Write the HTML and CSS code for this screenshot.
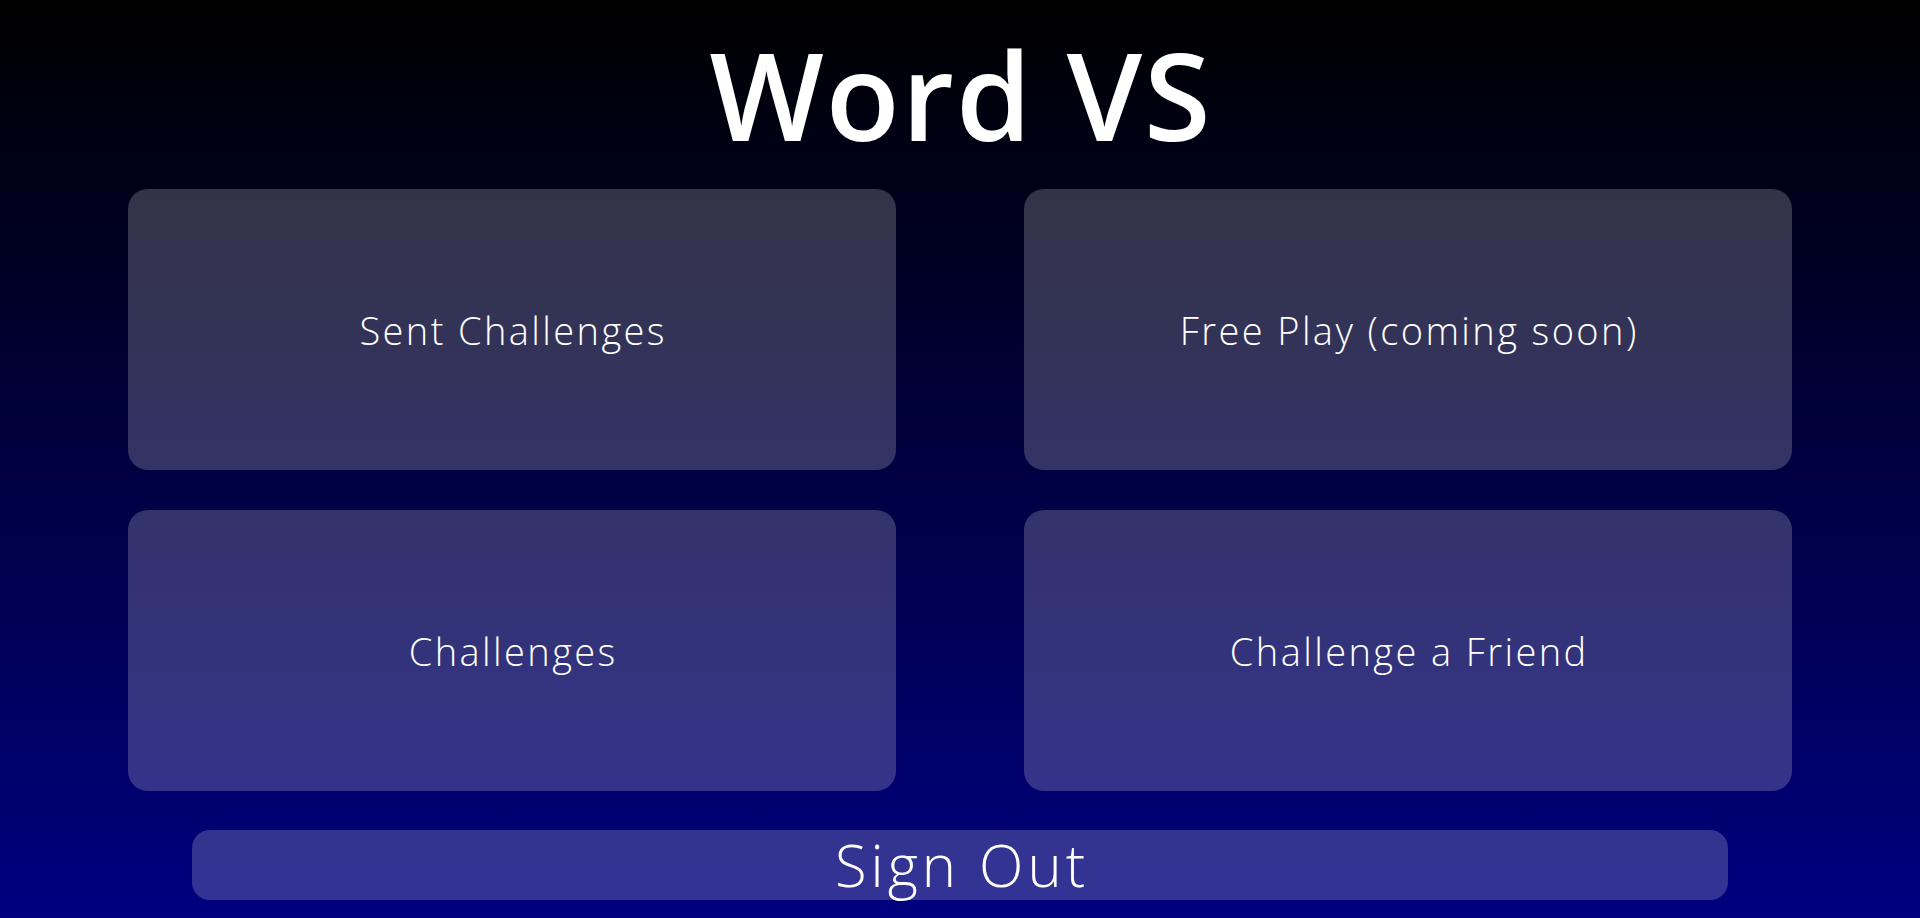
FILE: index.html
```html
<!DOCTYPE html>
<html lang="en">
<head>
<meta charset="utf-8">
<title>Word VS</title>
<link rel="stylesheet" href="styles.css">
</head>
<body>
<main class="page">
  <h1 class="title">Word VS</h1>
  <div class="menu">
    <button class="card">Sent Challenges</button>
    <button class="card">Free Play (coming soon)</button>
    <button class="card">Challenges</button>
    <button class="card">Challenge a Friend</button>
  </div>
  <button class="signout">Sign Out</button>
</main>
</body>
</html>
```

FILE: styles.css
```css
html, body {
  margin: 0;
  padding: 0;
}
body {
  height: 918px;
  overflow: hidden;
  background: linear-gradient(to bottom, #000000 0%, #000080 100%);
  font-family: "Open Sans", "Liberation Sans", sans-serif;
  color: #ffffff;
}
.page {
  display: flex;
  flex-direction: column;
  align-items: center;
}
.title {
  margin: 0;
  height: 189px;
  box-sizing: border-box;
  padding-top: 24px;
  padding-left: 2px;
  font-size: 121px;
  line-height: 140px;
  font-weight: 600;
  letter-spacing: 2px;
  text-align: center;
}
.menu {
  width: 100%;
  box-sizing: border-box;
  padding: 0 128px;
  display: grid;
  grid-template-columns: 1fr 1fr;
  grid-auto-rows: 281px;
  column-gap: 128px;
  row-gap: 40px;
}
.card, .signout {
  border: none;
  margin: 0;
  padding: 0;
  background: rgba(255, 255, 255, 0.2);
  color: #ffffff;
  font-family: inherit;
  font-weight: 300;
  cursor: pointer;
}
.card {
  border-radius: 20px;
  font-size: 38px;
  letter-spacing: 2.4px;
  padding-left: 2.4px;
}
.signout {
  margin-top: 39px;
  width: 80%;
  height: 70px;
  border-radius: 18px;
  font-size: 58px;
  letter-spacing: 4px;
  padding-left: 4px;
  line-height: 70px;
}
```
